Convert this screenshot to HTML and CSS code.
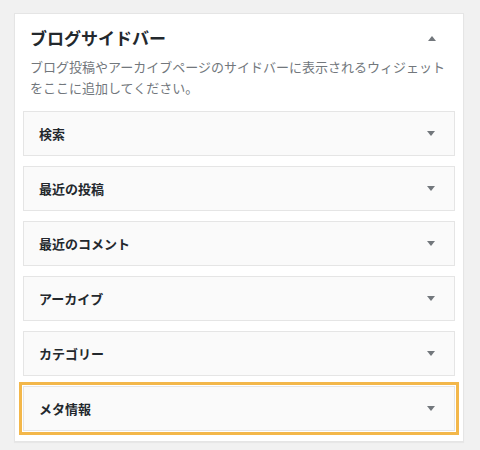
FILE: index.html
```html
<!DOCTYPE html>
<html lang="ja">
<head>
    <meta charset="UTF-8">
    <meta name="viewport" content="width=device-width, initial-scale=1.0">
    <title>ブログサイドバー</title>
    <link rel="stylesheet" href="styles.css">
</head>
<body>
    <div class="sidebar-panel">
        <div class="sidebar-head">
            <div class="sidebar-title">
                <h2>ブログサイドバー</h2>
                <span class="arrow arrow-up"></span>
            </div>
            <p class="sidebar-desc">ブログ投稿やアーカイブページのサイドバーに表示されるウィジェットをここに追加してください。</p>
        </div>

        <div class="widget">
            <span class="widget-name">検索</span>
            <span class="arrow"></span>
        </div>
        <div class="widget">
            <span class="widget-name">最近の投稿</span>
            <span class="arrow"></span>
        </div>
        <div class="widget">
            <span class="widget-name">最近のコメント</span>
            <span class="arrow"></span>
        </div>
        <div class="widget">
            <span class="widget-name">アーカイブ</span>
            <span class="arrow"></span>
        </div>
        <div class="widget">
            <span class="widget-name">カテゴリー</span>
            <span class="arrow"></span>
        </div>
        <div class="widget highlight">
            <span class="widget-name">メタ情報</span>
            <span class="arrow"></span>
        </div>
    </div>
</body>
</html>
```

FILE: styles.css
```css
body {
    margin: 0;
    padding: 13px 16px 8px 14px;
    background-color: #f1f1f1;
    font-family: "Noto Sans CJK JP", "Noto Sans", sans-serif;
    color: #23282d;
}

.sidebar-panel {
    background-color: #fff;
    border: 1px solid #e5e5e5;
    box-shadow: 0 1px 1px rgba(0, 0, 0, 0.04);
    padding: 0 8px;
}

.sidebar-head {
    padding: 12px 0 13px;
}

.sidebar-title {
    display: flex;
    align-items: center;
    justify-content: space-between;
    padding: 0 19px 0 7px;
}

.sidebar-title h2 {
    margin: 0;
    font-size: 17px;
    line-height: 24px;
    font-weight: bold;
}

.sidebar-desc {
    margin: 6px 0 0;
    padding: 0 7px;
    font-size: 13px;
    line-height: 21px;
    color: #72777c;
}

.widget {
    display: flex;
    align-items: center;
    justify-content: space-between;
    background-color: #fafafa;
    border: 1px solid #e5e5e5;
    padding: 11px 19px 11px 15px;
    margin-bottom: 10px;
}

.widget-name {
    font-size: 13px;
    line-height: 21px;
    font-weight: bold;
}

.highlight {
    outline: 3px solid #f3b74a;
    outline-offset: 1px;
}

.arrow {
    width: 0;
    height: 0;
    border-left: 4px solid transparent;
    border-right: 4px solid transparent;
    border-top: 5px solid #72777c;
}

.arrow-up {
    border-top: none;
    border-bottom: 5px solid #72777c;
}
```
